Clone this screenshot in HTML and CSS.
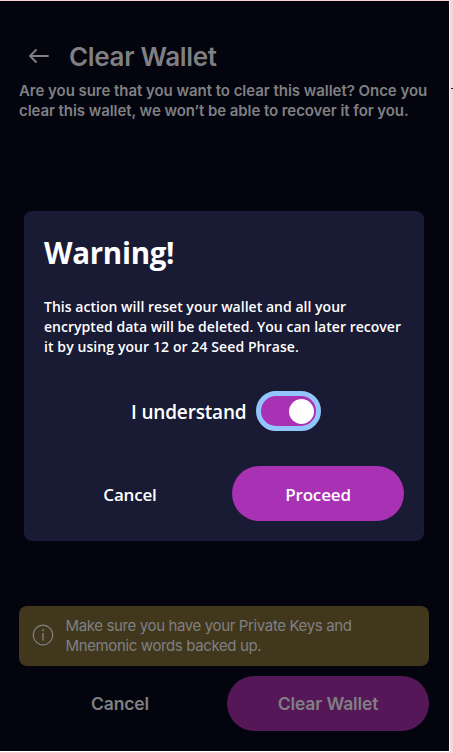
FILE: index.html
```html
<!DOCTYPE html>
<html lang="en">
<head>
<meta charset="utf-8">
<title>Clear Wallet</title>
<link rel="stylesheet" href="styles.css">
</head>
<body>
<main class="screen">
  <header class="header">
    <svg class="back" viewBox="0 0 20 14" width="20" height="14"><path d="M19 7H1M7 1L1 7l6 6" fill="none" stroke="currentColor" stroke-width="1.8" stroke-linecap="round" stroke-linejoin="round"/></svg>
    <h1 class="title">Clear Wallet</h1>
  </header>
  <p class="intro">Are you sure that you want to clear this wallet? Once you<br><span class="intro-end">clear this wallet, we won’t be able to recover it for you.</span></p>
  <div class="notice">
    <svg class="info" viewBox="0 0 22 22" width="22" height="22"><circle cx="11" cy="11" r="9.8" fill="none" stroke="currentColor" stroke-width="1.2"/><path d="M11 9v7.4" stroke="currentColor" stroke-width="1.4"/><circle cx="11" cy="6.2" r="1" fill="currentColor"/></svg>
    <p class="notice-text">Make sure you have your Private Keys and<br>Mnemonic words backed up.</p>
  </div>
  <footer class="actions">
    <button class="btn">Cancel</button>
    <button class="btn btn-clear">Clear Wallet</button>
  </footer>
</main>
<div class="edge-mark"></div>
<section class="modal" role="dialog">
  <h2 class="modal-title">Warning!</h2>
  <p class="modal-text">This action will reset your wallet and all your<br>encrypted data will be deleted. You can later recover<br><span class="modal-text-end">it by using your 12 or 24 Seed Phrase.</span></p>
  <div class="confirm">
    <span class="confirm-label">I understand</span>
    <span class="toggle"><span class="knob"></span></span>
  </div>
  <div class="modal-actions">
    <button class="mbtn">Cancel</button>
    <button class="mbtn mbtn-proceed">Proceed</button>
  </div>
</section>
</body>
</html>
```
FILE: styles.css
```css
* { box-sizing: border-box; }
body {
  margin: 0;
  width: 453px;
  height: 753px;
  padding-top: 1px;
  overflow: hidden;
  background: #f8d5d9;
}
h1, h2, p { margin: 0; white-space: nowrap; }
button { border: 0; padding: 0; background: none; color: inherit; font: inherit; letter-spacing: inherit; }
svg { display: block; flex: none; }

.screen {
  display: flex;
  flex-direction: column;
  width: 450px;
  height: 751px;
  padding: 38px 20px 20px 19px;
  border-right: 1px solid #fff;
  border-bottom: 1px solid #fff;
  background: #03040d;
  color: #808083;
  font-family: Inter, sans-serif;
}
.header { display: flex; align-items: center; height: 34px; padding-left: 10px; }
.back { margin-right: 20px; }
.title { padding-top: 2px; font-size: 26px; font-weight: 600; line-height: 34px; letter-spacing: -0.33px; }
.intro { margin-top: 8px; font-size: 15px; font-weight: 600; line-height: 20px; letter-spacing: -0.04px; }
.intro-end { letter-spacing: -0.07px; }
.notice {
  display: flex;
  align-items: center;
  width: 410px;
  height: 60px;
  margin-top: auto;
  padding: 0 12px 0 13px;
  border-radius: 8px;
  background: #41371c;
}
.info { position: relative; top: -1px; margin-right: 12px; }
.notice { padding-left: 12.5px; }
.notice-text { font-size: 15px; line-height: 20px; letter-spacing: -0.37px; }
.actions {
  display: grid;
  grid-template-columns: 202px 202px;
  column-gap: 6px;
  height: 55px;
  margin-top: 10px;
  font-size: 17.5px;
  font-weight: 600;
  letter-spacing: -0.12px;
}
.btn-clear { border-radius: 28px; background: #551758; }

.edge-mark { position: absolute; left: 451px; top: 88px; width: 2px; height: 1px; background: #222; }

.modal {
  position: absolute;
  left: 24px;
  top: 211px;
  width: 400px;
  height: 330px;
  padding: 21px 20px 20px;
  border-radius: 8px;
  background: #191a34;
  color: #fff;
  font-family: "Open Sans", sans-serif;
}
.modal-title { font-size: 29.5px; font-weight: 700; line-height: 42px; letter-spacing: -0.3px; }
.modal-text { margin-top: 23px; font-size: 14px; font-weight: 600; line-height: 20px; letter-spacing: 0.03px; }
.modal-text-end { letter-spacing: 0.09px; }
.confirm { display: flex; align-items: center; height: 40px; margin: 34px 0 35px 87px; }
.confirm-label { width: 125px; padding-top: 1px; font-size: 19px; font-weight: 600; letter-spacing: -0.17px; white-space: nowrap; }
.toggle {
  display: flex;
  justify-content: flex-end;
  align-items: center;
  width: 65px;
  height: 40px;
  padding-right: 2px;
  border: 5px solid #93c5fd;
  border-radius: 20px;
  background: #a931b4;
}
.knob { width: 25px; height: 25px; border-radius: 50%; background: #fff; }
.modal-actions {
  display: grid;
  grid-template-columns: 172px 172px;
  column-gap: 16px;
  height: 55px;
  font-size: 17px;
  font-weight: 600;
  letter-spacing: -0.17px;
}
.mbtn { padding-top: 2px; }
.mbtn-proceed { border-radius: 28px; background: #a931b4; }
```
